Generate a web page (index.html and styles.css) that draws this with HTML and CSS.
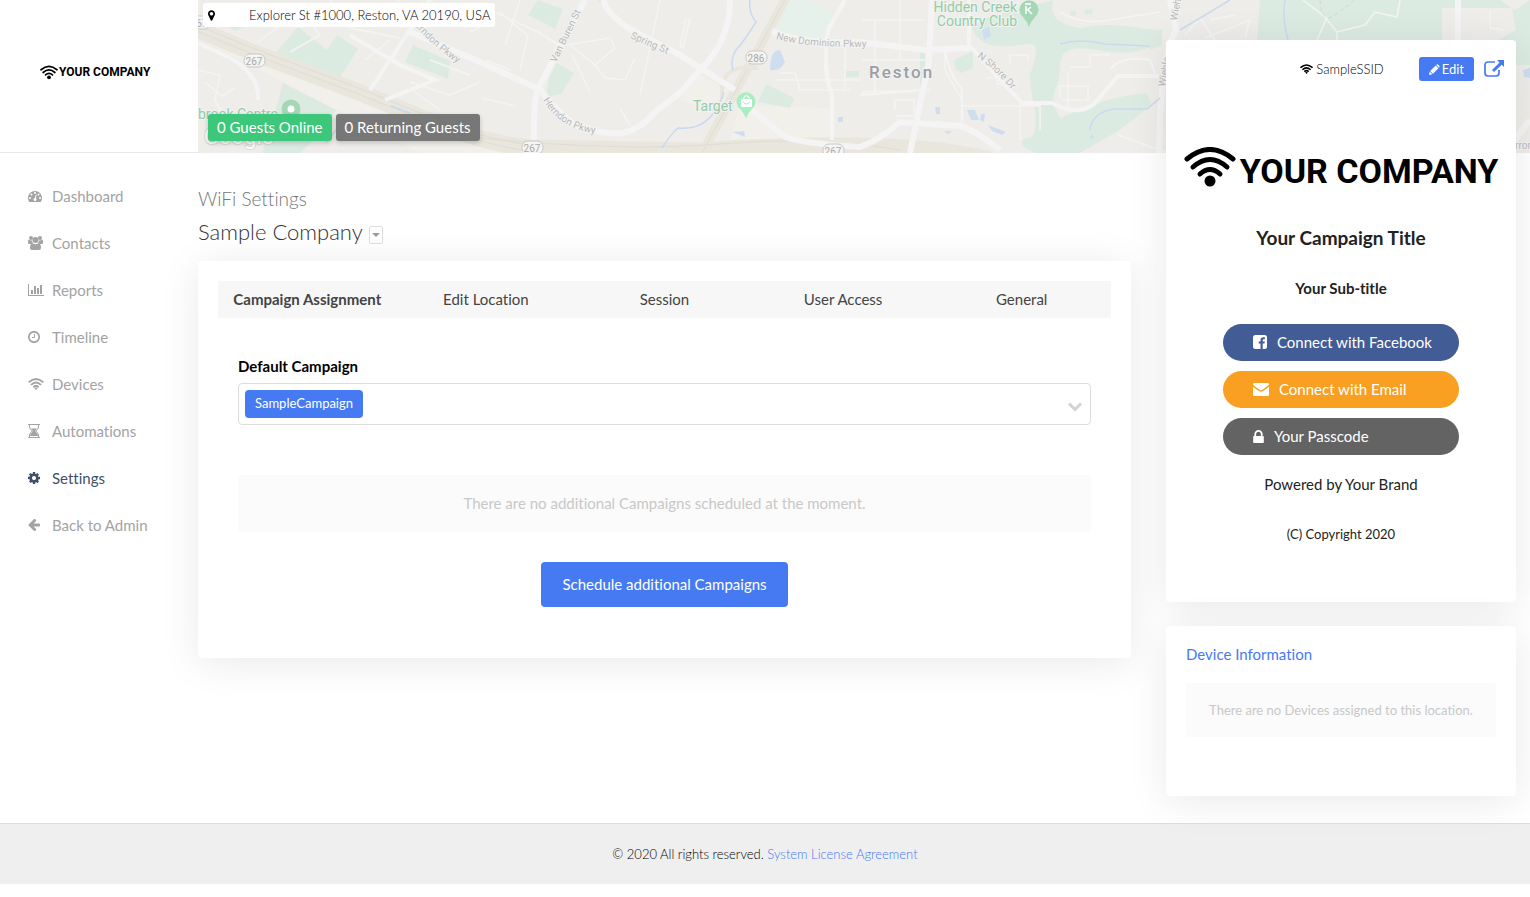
FILE: index.html
```
<!DOCTYPE html>
<html lang="en">
<head>
    <meta charset="UTF-8">
    <meta name="viewport" content="width=device-width, initial-scale=1.0">
    <title>WiFi Settings</title>
    <link rel="stylesheet" href="styles.css">
</head>
<body>
    <!-- shared icons -->
    <svg class="sprite" aria-hidden="true">
        <symbol id="logo-wifi" viewBox="0 0 52 40">
            <g fill="none" stroke="currentColor" stroke-width="5" stroke-linecap="round">
                <path d="M3 12Q26-7 49 12"/>
                <path d="M9 20Q26 5 43 20"/>
                <path d="M16 27Q26 18 36 27"/>
            </g>
            <circle cx="26" cy="34" r="5.5" fill="currentColor"/>
        </symbol>
        <symbol id="wifi" viewBox="0 0 16 12">
            <g fill="none" stroke="currentColor" stroke-width="1.9">
                <path d="M.6 4.4Q8-2.4 15.4 4.4"/>
                <path d="M3 6.9Q8 2.3 13 6.9"/>
                <path d="M5.3 9.2Q8 6.9 10.7 9.2"/>
            </g>
            <path d="M6.3 10.2Q8 8.9 9.7 10.2L8 12z" fill="currentColor"/>
        </symbol>
    </svg>

    <div class="page">
        <div class="brand">
            <a href="#" class="logo logo-small"><svg><use href="#logo-wifi"/></svg>YOUR COMPANY</a>
        </div>

        <header class="map">
            <svg class="map-canvas" viewBox="198 0 1332 153" preserveAspectRatio="xMinYMin slice" aria-hidden="true">
                <rect x="198" width="1332" height="153" fill="#eeedea"/>
                <g fill="#f2f0ea">
                    <path d="M198 20L420 110 540 153H420L198 38z"/>
                    <path d="M740 105L830 108 832 138 770 143 730 140zM700 75L728 90 715 110 680 100z"/>
                </g>
                <g fill="#dcebe1">
                    <path d="M298 27L272 57 298 68 338 80 358 49 337 35 327 50z"/>
                    <path d="M283 83L336 110 315 138 300 153H262L270 130z"/>
                    <path d="M413 45L450 61 448 79 405 62zM230 22L245 26 235 31 227 26z"/>
                    <path d="M538 0L563 9 555 29 528 15zM557 63L574 73 561 94 546 97 549 78z"/>
                    <path d="M598 0H601V4zM766 84L794 98 790 108 758 102zM846 71H859V77H846zM920 51H925V88H920z"/>
                    <path d="M954 60L973 51 973 68 962 73 955 69z"/>
                    <path d="M972 28L988 17 1053 0C1049 20 1062 25 1082 28 1112 20 1140 30 1163 30L1158 45 1142 50C1110 58 1092 44 1070 50 1055 53 1064 74 1055 90 1050 105 1058 112 1060 118 1084 108 1110 96 1147 93L1151 104C1125 130 1098 142 1080 153H1035C1018 146 1018 138 1032 137 1042 120 1029 95 1030 75 1035 60 1040 44 1030 44 1005 46 982 52 972 28z"/>
                    <path d="M1260 0H1500L1515 10 1530 0V65H1510L1500 40H1257zM1150 30L1162 30 1162 45 1150 50zM1070 12L1075 10 1077 15 1071 16zM1084 10L1093 9 1092 14 1085 14z"/>
                </g>
                <path d="M786 0H809L837 18 826 39 776 31z" fill="#e6f1eb"/>
                <path d="M1442 8H1512L1516 30 1498 40H1442z" fill="#eeedea"/>

                <!-- highways -->
                <g fill="none">
                    <path d="M192 27Q245 50 300 70T420 117T530 148L700 151Q900 137 990 160" stroke="#e9e6de" stroke-width="17"/>
                    <path d="M787-4L702 153" stroke="#e9e6de" stroke-width="9"/>
                    <path d="M192 23Q245 46 300 66T420 113T530 145M192 29Q245 52 300 72T420 119T530 151M787-4L702 153M480 138Q620 152 720 144T900 150" stroke="#e1ddd3"/>
                    <path d="M722 98C720 70 735 66 758 68" stroke="#e9e6de" stroke-width="4"/>
                </g>

                <!-- small streets -->
                <g fill="none" stroke="#f4f4f3" stroke-width="1.5">
                    <path d="M258 42L300 10 320 35 290 52M330 0L350 28 400 38M365 60L390 40M400 0L375 20M410 82L450 95 480 82M412 90L440 110M430 60L470 75"/>
                    <path d="M198 70L220 75 215 100 232 130M205 82L222 96 235 88M480 5L540 33 560 46 610 38 615 48 595 65 570 45M500 12L528 36 520 70M486 60L510 70M520 0L505 45M490 22L470 32"/>
                    <path d="M595 65L605 78 625 80 635 58M660 0L640 95M690 18L683 48 680 47 686 18M572 55L590 92M620 109L630 125M482 98L515 106"/>
                    <path d="M775 80H860M780 73H795L800 90H850M845 40V92M862 60H925M862 20H925M875 20V95M900 0V60M862 92L930 90"/>
                    <path d="M945 50V70L962 100V125M895 110V100H914V116H895M986 78H997V84H1017M1010 65V55H1028V60M1062 100H1088V86H1060V98M1070 67H1090V55H1110M1068 72V108M1060 12Q1080 25 1110 20T1160 12M962 106H1040V130M1020 100V140M1118 135L1165 152"/>
                    <path d="M1185 35L1200 18 1215 40M1210 20L1235 15M1205 38L1250 20 1245 38M1303 0L1325 17 1337 32 1365 25 1375 12 1397 17 1400 0M1327 17L1317 40M1337 32V40M1490 10V28L1505 30"/>
                </g>

                <!-- main streets -->
                <g fill="none" stroke="#f4f4f4">
                    <path d="M198 43L230 58Q260 75 258 100M350 35L400 65 435 80 385 100M430 0L370 90" stroke-width="4"/>
                    <path d="M585 0L540 85Q533 95 534 140M410 32L480 62 541 90Q550 105 575 125 600 135 622 133 640 130 655 112L680 93 700 70Q730 42 730 0" stroke-width="6"/>
                    <path d="M603 0Q608 15 630 29L680 55 735 90M752 110L785 137Q800 143 860 147 880 140 900 122L960 126Q975 130 1000 150M772 31Q800 44 860 42L925 50 970 48" stroke-width="6"/>
                    <path d="M932 0L929 60 910 153" stroke-width="6"/>
                    <path d="M845 0L828 30Q822 70 832 95V140M969 0V45Q1000 80 1022 103H1052Q1078 117 1094 104L1118 76H1160" stroke-width="4"/>
                    <path d="M945 50Q948 72 962 90V120M1110 70Q1120 55 1150 60L1157 78M860 95L925 90" stroke-width="2"/>
                    <path d="M1170 0L1176 30Q1160 60 1159 153M1458 0V40M1530 120L1505 153" stroke-width="6"/>
                </g>
                <path d="M1320 0Q1322 25 1335 15L1355 0" fill="none" stroke="#cddad0" stroke-dasharray="4 3"/>

                <!-- water -->
                <path d="M750 0Q748 12 756 22 745 40 736 50 730 60 733 70M724 92Q720 105 712 115 700 130 678 128 670 135 662 148M1060 44Q1080 38 1105 44L1150 46M1090 130Q1092 112 1115 109H1147L1160 98M1180 30L1230 0M1285 0Q1282 20 1288 40M391 106L410 113" fill="none" stroke="#c9daf0" stroke-width="1.5"/>
                <g fill="#cfdeee">
                    <path d="M770 70Q770 50 780 50L785 62Q780 72 770 70zM982 30L989 27 991 36 984 40zM967 110L975 110 979 120 971 120zM981 114L985 114 984 122 980 120zM988 125L1006 132 1002 135 992 131zM935 107H940V114H936zM838 117H843V122H838zM944 131H952L948 134zM732 132L744 131 745 137zM1523 70L1530 68V78L1524 77zM332 133L340 125 330 140 324 145z"/>
                    <circle cx="1092" cy="137" r="2"/>
                </g>

                <!-- route shields -->
                <g class="map-shield">
                    <rect x="244" y="54" width="21" height="13" rx="6"/><text x="254" y="65">267</text>
                    <rect x="189" y="16" width="21" height="13" rx="6"/><text x="199" y="27">267</text>
                    <rect x="522" y="141" width="21" height="13" rx="6"/><text x="532" y="152">267</text>
                    <rect x="746" y="51" width="21" height="13" rx="6"/><text x="756" y="62">286</text>
                    <rect x="823" y="144" width="21" height="13" rx="6"/><text x="833" y="155">267</text>
                </g>

                <!-- street names -->
                <defs>
                    <path id="st-herndon" d="M543 100Q554 119 572 127T600 133"/>
                    <path id="st-herndon2" d="M410 20Q436 52 480 78"/>
                    <path id="st-dominion" d="M776 39Q806 48 875 47"/>
                    <path id="st-spring" d="M630 38L676 58"/>
                    <path id="st-shore" d="M977 57Q998 72 1016 95"/>
                </defs>
                <g class="map-street">
                    <text><textPath href="#st-herndon">Herndon Pkwy</textPath></text>
                    <text><textPath href="#st-herndon2">Herndon Pkwy</textPath></text>
                    <text><textPath href="#st-dominion">New Dominion Pkwy</textPath></text>
                    <text><textPath href="#st-spring">Spring St</textPath></text>
                    <text><textPath href="#st-shore">N Shore Dr</textPath></text>
                    <text transform="translate(556 63) rotate(-64)">Van Buren St</text>
                    <text transform="translate(1177 21) rotate(-80)">Wiehle</text>
                    <text transform="translate(1165 87) rotate(-80)">Wiehle</text>
                    <text x="1515" y="149">rron</text>
                </g>

                <!-- places -->
                <g class="map-place">
                    <text x="1017" y="12" text-anchor="end">Hidden Creek</text>
                    <text x="1017" y="26" text-anchor="end">Country Club</text>
                    <text x="693" y="111">Target</text>
                    <text x="198" y="119">brook Centre</text>
                </g>
                <text class="map-city" x="869" y="78">Reston</text>
                <path d="M1029 27Q1027 21 1023 17A9.500 9.500 0 1 1 1035 17Q1031 21 1029 27z" fill="#a5d6b6"/>
                <path d="M1025 4H1031M1026 6V14M1027 10L1031 7M1028 10L1032 14" stroke="#fff" stroke-width="1.5" fill="none"/>
                <path d="M746 118Q744 113 740 109A9.500 9.500 0 1 1 752 109Q748 113 746 118z" fill="#abedc2"/>
                <rect x="741" y="99" width="11" height="8" rx="1" fill="#fff"/>
                <path d="M743 102Q746 106 750 102" stroke="#abedc2" fill="none"/>
                <path d="M744 99V97Q746 94 749 97V99" stroke="#fff" fill="none"/>
                <circle cx="291" cy="109" r="6.5" fill="#fff" stroke="#a5d6b6" stroke-width="6"/>
                <text class="map-mark" x="204" y="144">Google</text>
            </svg>
            <div class="map-info">
                <address class="address">
                    <svg viewBox="384 128 1024 1536"><path fill="currentColor" d="M1152 640q0-106-75-181t-181-75-181 75-75 181 75 181 181 75 181-75 75-181zm256 0q0 109-33 179l-364 774q-16 33-47.500 52t-67.500 19-67.500-19-46.500-52l-365-774q-33-70-33-179 0-212 150-362t362-150 362 150 150 362z"/></svg>
                    <span>Explorer St #1000, Reston, VA 20190, USA</span>
                </address>
                <div class="badges">
                    <span class="badge badge-online">0 Guests Online</span>
                    <span class="badge">0 Returning Guests</span>
                </div>
            </div>
        </header>

        <nav class="menu">
            <a href="#">
                <svg width="14" height="14" viewBox="0 0 1792 1792"><path fill="currentColor" d="M384 1152q0-53-37.500-90.500t-90.500-37.500-90.500 37.500-37.500 90.500 37.500 90.500 90.500 37.500 90.500-37.500 37.500-90.500zm192-448q0-53-37.500-90.500t-90.500-37.500-90.500 37.500-37.500 90.500 37.500 90.500 90.500 37.500 90.500-37.500 37.500-90.500zm428 481l101-382q6-26-7.500-48.500t-38.500-29.500-48 6.500-30 39.500l-101 382q-60 5-107 43.500t-63 98.500q-20 77 20 146t117 89 146-20 89-117q16-60-6-117t-72-91zm660-33q0-53-37.500-90.500t-90.500-37.500-90.500 37.500-37.500 90.500 37.500 90.500 90.500 37.500 90.500-37.500 37.500-90.500zm-640-640q0-53-37.500-90.500t-90.500-37.500-90.500 37.500-37.500 90.500 37.500 90.500 90.500 37.500 90.500-37.500 37.500-90.500zm448 192q0-53-37.500-90.500t-90.500-37.500-90.500 37.500-37.500 90.500 37.500 90.500 90.500 37.500 90.500-37.500 37.500-90.500zm320 448q0 261-141 483-19 29-54 29h-1402q-35 0-54-29-141-221-141-483 0-182 71-348t191-286 286-191 348-71 348 71 286 191 191 286 71 348z"/></svg>
                <span>Dashboard</span>
            </a>
            <a href="#">
                <svg width="15" height="14" viewBox="0 0 15 14" fill="currentColor"><circle cx="3" cy="2" r="2"/><circle cx="12" cy="2" r="2"/><circle cx="7.5" cy="4" r="3"/><path d="M0 7V5.500Q0 3.600 1 3.600 3 5 4 4.200 4 6 5 7 3.700 7 3.200 8H1.200Q0 8 0 7zM15 7V5.500Q15 3.600 14 3.600 12 5 11 4.200 11 6 10 7 11.300 7 11.800 8H13.800Q15 8 15 7zM2 12Q2 7.500 4.700 7.300 7.500 9 10.300 7.300 13 7.500 13 12 13 14 11 14H4Q2 14 2 12z"/></svg>
                <span>Contacts</span>
            </a>
            <a href="#">
                <svg width="16" height="14" viewBox="0 0 16 14" fill="currentColor"><path d="M0 1H1V12H16V13H0zM3 7H5V11H3zM6 3H8V11H6zM9 5H11V11H9zM12 2H14V11H12z"/></svg>
                <span>Reports</span>
            </a>
            <a href="#">
                <svg width="12" height="12" viewBox="0 0 12 12" fill="none" stroke="currentColor"><circle cx="6" cy="6" r="5.2" stroke-width="1.7"/><path d="M6.500 3V6.500H4"/></svg>
                <span>Timeline</span>
            </a>
            <a href="#">
                <svg width="16" height="12"><use href="#wifi"/></svg>
                <span>Devices</span>
            </a>
            <a href="#">
                <svg width="12" height="14" viewBox="0 0 12 14" fill="currentColor"><path d="M0 0H12V1H0zM0 13H12V14H0z"/><path d="M1.500 1V3Q2 6 4.500 7 2 8 1.500 11V13M10.500 1V3Q10 6 7.500 7 10 8 10.500 11V13" fill="none" stroke="currentColor"/><path d="M3 4.500H9L7 7 9.500 10 10 12H2L2.500 10 5 7z"/></svg>
                <span>Automations</span>
            </a>
            <a href="#" class="active">
                <svg width="12" height="12" viewBox="128 128 1536 1536"><path fill="currentColor" d="M1152 896q0-106-75-181t-181-75-181 75-75 181 75 181 181 75 181-75 75-181zm512-109v222q0 12-8 23t-20 13l-185 28q-19 54-39 91 35 50 107 138 10 12 10 25t-9 23q-27 37-99 108t-94 71q-12 0-26-9l-138-108q-44 23-91 38-16 136-29 186-7 28-36 28h-222q-14 0-24.500-8.500t-11.500-21.500l-28-184q-49-16-90-37l-141 107q-10 9-25 9-14 0-25-11-126-114-165-168-7-10-7-23 0-12 8-23 15-21 51-66.500t54-70.500q-27-50-41-99l-183-27q-13-2-21-12.500t-8-23.500v-222q0-12 8-23t19-13l186-28q14-46 39-92-40-57-107-138-10-12-10-24 0-10 9-23 26-36 98.500-107.500t94.500-71.500q13 0 26 10l138 107q44-23 91-38 16-136 29-186 7-28 36-28h222q14 0 24.500 8.500t11.500 21.500l28 184q49 16 90 37l142-107q9-9 24-9 13 0 25 10 129 119 165 170 7 8 7 22 0 12-8 23-15 21-51 66.500t-54 70.500q26 50 41 98l183 28q13 2 21 12.500t8 23.500z"/></svg>
                <span>Settings</span>
            </a>
            <a href="#">
                <svg width="12" height="12" viewBox="0 192 1536 1536"><path fill="currentColor" d="M1536 896v128q0 53-32.500 90.500t-84.500 37.500h-704l293 294q38 36 38 90t-38 90l-75 76q-37 37-90 37-52 0-91-37l-651-652q-37-37-37-90 0-52 37-91l651-650q38-38 91-38 52 0 90 38l75 74q38 38 38 91t-38 91l-293 293h704q52 0 84.500 37.500t32.500 90.500z"/></svg>
                <span>Back to Admin</span>
            </a>
        </nav>

        <main class="main">
            <h1>WiFi Settings</h1>
            <h2>Sample Company <button type="button" class="toggle" aria-label="Change company"><svg viewBox="0 0 8 4"><path d="M0 0H8L4 4z" fill="currentColor"/></svg></button></h2>

            <section class="card settings">
                <div class="tabs" role="tablist">
                    <button type="button" role="tab" aria-selected="true" class="active">Campaign Assignment</button>
                    <button type="button" role="tab">Edit Location</button>
                    <button type="button" role="tab">Session</button>
                    <button type="button" role="tab">User Access</button>
                    <button type="button" role="tab">General</button>
                </div>
                <div class="settings-body">
                    <label for="campaign">Default Campaign</label>
                    <div class="picker">
                        <span class="tag">SampleCampaign</span>
                        <select id="campaign"><option></option></select>
                        <svg viewBox="0 0 14 10"><path d="M1 1.500L7 7.500 13 1.500" fill="none" stroke="currentColor" stroke-width="3"/></svg>
                    </div>
                    <p class="empty">There are no additional Campaigns scheduled at the moment.</p>
                    <button type="button" class="btn">Schedule additional Campaigns</button>
                </div>
            </section>
        </main>

        <aside class="side">
            <section class="card preview">
                <div class="preview-bar">
                    <span class="ssid"><svg><use href="#wifi"/></svg>SampleSSID</span>
                    <button type="button" class="edit"><svg viewBox="0 0 12 12" fill="currentColor"><path d="M0 12L.8 8.300 3.700 11.200zM1.300 7.700L7.300 1.700 10.300 4.700 4.300 10.700zM7.900 1.100Q9 0 9.800 .6L11.400 2.200Q12 3 10.900 4.100z"/></svg>Edit</button>
                    <a href="#" class="open" aria-label="Open preview"><svg viewBox="0 0 20 18"><path d="M11 2H4Q1 2 1 5V13Q1 16 4 16H12Q15 16 15 13V10" fill="none" stroke="currentColor" stroke-width="1.7"/><path d="M13 0H20V7L17.800 4.800 10 12 8 10 15.500 2.500z" fill="currentColor"/></svg></a>
                </div>
                <div class="logo logo-large"><svg><use href="#logo-wifi"/></svg>YOUR COMPANY</div>
                <h3>Your Campaign Title</h3>
                <h4>Your Sub-title</h4>
                <div class="connect">
                    <button type="button" class="facebook"><svg width="14" height="14" viewBox="0 0 14 14"><path fill="currentColor" d="M2.500 0H11.500Q14 0 14 2.500V11.500Q14 14 11.500 14H9.700V8.600H11.500L11.800 6.500H9.700V5.200Q9.700 4.200 10.800 4.200H11.900V2.300Q7.500 1.500 7.500 5V6.500H5.700V8.600H7.500V14H2.500Q0 14 0 11.500V2.500Q0 0 2.500 0z"/></svg>Connect with Facebook</button>
                    <button type="button" class="email"><svg width="16" height="14" viewBox="0 0 16 14"><path fill="currentColor" d="M1.500 1H14.500Q16 1 16 2.300 15.500 4 8.500 8.300 8 8.500 7.500 8.300 .5 4 0 2.300 0 1 1.500 1zM0 4.500Q1 6 7 9.500 8 10 9 9.500 15 6 16 4.500V12.500Q16 14 14.500 14H1.500Q0 14 0 12.500z"/></svg>Connect with Email</button>
                    <button type="button" class="passcode"><svg width="11" height="13" viewBox="320 128 1152 1408"><path fill="currentColor" d="M640 768h512v-192q0-106-75-181t-181-75-181 75-75 181v192zm832 96v576q0 40-28 68t-68 28h-960q-40 0-68-28t-28-68v-576q0-40 28-68t68-28h32v-192q0-184 132-316t316-132 316 132 132 316v192h32q40 0 68 28t28 68z"/></svg>Your Passcode</button>
                </div>
                <p>Powered by Your Brand</p>
                <p class="small">(C) Copyright 2020</p>
            </section>

            <section class="card devices">
                <h5>Device Information</h5>
                <p class="empty">There are no Devices assigned to this location.</p>
            </section>
        </aside>
    </div>

    <footer class="footer">© 2020 All rights reserved. <a href="#">System License Agreement</a></footer>
</body>
</html>
```
FILE: styles.css
```
* {
    box-sizing: border-box;
    margin: 0;
    padding: 0;
}

body {
    font-family: Lato, 'Liberation Sans', sans-serif;
    font-size: 15px;
    font-variant-ligatures: none;
    line-height: 20px;
    color: #222;
    background-color: #fff;
}

button,
select {
    font: inherit;
    color: inherit;
    background: none;
    border: 0;
    cursor: pointer;
}

a {
    color: #467af3;
    text-decoration: none;
}

.sprite {
    display: none;
}

.page {
    display: grid;
    grid-template-columns: 198px minmax(0, 1fr) 364px;
    grid-template-rows: 153px auto;
}

/* logo */
.brand {
    display: flex;
    align-items: center;
    padding: 0 0 8px 40px;
    border-bottom: 1px solid #e8e8e8;
}

.logo {
    display: flex;
    align-items: center;
    font-family: Roboto, sans-serif;
    font-weight: 700;
    white-space: nowrap;
    color: #000;
}

.logo-small {
    gap: 1px;
    font-size: 12px;
}

.logo-small svg {
    width: 18px;
    height: 15px;
}

.logo-large {
    justify-content: center;
    gap: 4px;
    font-size: 34px;
    line-height: 49px;
}

.logo-large svg {
    align-self: flex-start;
    width: 52px;
    height: 40px;
}

/* map header */
.map {
    grid-column: 2 / 4;
    grid-row: 1;
    display: grid;
    overflow: hidden;
    background-color: #eeedea;
}

.map-canvas,
.map-info {
    grid-area: 1 / 1;
}

.map-canvas {
    width: 100%;
    height: 153px;
}

.map-canvas text {
    font-family: Roboto, sans-serif;
    paint-order: stroke;
    stroke: #f3f3f1;
    stroke-width: 2px;
}

.map-shield rect {
    fill: #f6f6f6;
    stroke: #c8c8c8;
}

.map-shield text {
    font-size: 10px;
    text-anchor: middle;
    fill: #aaa;
}

.map-street {
    font-size: 10px;
    fill: #b9b9b9;
}

.map-place {
    font-size: 14px;
    fill: #93cba7;
}

.map-canvas .map-city {
    font-size: 17px;
    font-weight: 500;
    letter-spacing: 2px;
    fill: #9b9ea3;
}

.map-canvas .map-mark {
    font-size: 22px;
    fill: #fff;
    stroke: #d8d8d6;
}

.map-info {
    z-index: 1;
    display: flex;
    flex-direction: column;
    justify-content: space-between;
    align-items: flex-start;
    padding: 3px 5px 12px;
}

.address {
    display: flex;
    align-items: center;
    gap: 34px;
    height: 24px;
    padding: 0 5px;
    font-size: 13px;
    font-style: normal;
    font-weight: 300;
    color: #000;
    background-color: #fff;
    border-radius: 3px;
}

.address svg {
    width: 7px;
    height: 11px;
}

.badges {
    display: flex;
    gap: 4px;
    padding-left: 5px;
}

.badge {
    padding: 3px 9px 4px;
    color: #fff;
    background-color: #777;
    border-radius: 3px;
    box-shadow: 0 2px 5px rgba(0, 0, 0, 0.2);
}

.badge-online {
    background-color: #3cc77a;
}

/* left menu */
.menu {
    padding: 19px 0 0 28px;
}

.menu a {
    display: grid;
    grid-template-columns: 24px auto;
    align-items: center;
    height: 47px;
    color: #a3a3a3;
}

.menu .active {
    color: #40506b;
}

/* main column */
.main {
    padding: 34px 35px 0 0;
}

.main h1 {
    font-size: 19px;
    font-weight: 300;
    line-height: 24px;
    color: #777;
}

.main h2 {
    display: flex;
    align-items: center;
    gap: 6px;
    margin: 7px 0 16px;
    font-size: 22px;
    font-weight: 300;
    line-height: 27px;
    color: #333;
}

.toggle {
    display: flex;
    align-items: center;
    justify-content: center;
    width: 14px;
    height: 18px;
    margin-top: 7px;
    color: #999;
    border: 1px solid #ddd;
    border-radius: 2px;
}

.toggle svg {
    width: 8px;
    height: 4px;
}

.card {
    background-color: #fff;
    border-radius: 4px;
    box-shadow: 0 5px 40px rgba(0, 0, 0, 0.09);
}

.settings {
    padding: 20px 20px 51px;
}

.tabs {
    display: grid;
    grid-template-columns: repeat(5, 1fr);
    height: 37px;
    color: #444;
    background-color: #f7f7f7;
}

.tabs button {
    padding-bottom: 2px;
}

.tabs .active {
    font-weight: 700;
}

.settings-body {
    display: flex;
    flex-direction: column;
    padding: 38px 20px 0;
}

.settings-body label {
    margin-bottom: 7px;
    font-weight: 700;
    color: #000;
}

.picker {
    position: relative;
    display: flex;
    height: 42px;
    padding: 6px;
    border: 1px solid #ddd;
    border-radius: 4px;
}

.picker select {
    flex: 1;
    appearance: none;
}

.picker svg {
    position: absolute;
    right: 8px;
    top: 18px;
    width: 14px;
    height: 10px;
    color: #d2d2d2;
    pointer-events: none;
}

.tag {
    height: 28px;
    padding: 3px 10px;
    font-size: 13px;
    color: #fff;
    background-color: #467af3;
    border-radius: 4px;
}

.empty {
    padding: 18px;
    text-align: center;
    color: #c8c8c8;
    background-color: #fbfbfb;
    border-radius: 3px;
}

.settings .empty {
    padding-bottom: 19px;
    margin: 50px 0 30px;
}

.btn {
    align-self: center;
    height: 45px;
    padding: 0 21px 1px;
    color: #fff;
    background-color: #467af3;
    border-radius: 4px;
}

/* right column */
.side {
    grid-column: 3;
    grid-row: 1 / 3;
    z-index: 2;
    display: flex;
    flex-direction: column;
    gap: 24px;
    padding: 40px 14px 27px 0;
}

.preview {
    padding: 17px 12px 58px;
    text-align: center;
}

.preview-bar {
    display: flex;
    align-items: center;
    justify-content: flex-end;
    gap: 10px;
    margin-bottom: 66px;
}

.ssid {
    display: flex;
    align-items: center;
    gap: 3px;
    margin-right: 25px;
    font-size: 13px;
    font-weight: 300;
    color: #000;
}

.ssid svg {
    width: 13px;
    height: 10px;
}

.edit {
    display: flex;
    align-items: center;
    gap: 2px;
    height: 24px;
    padding: 0 10px;
    font-size: 13px;
    color: #fff;
    background-color: #467af3;
    border-radius: 3px;
}

.edit svg {
    width: 11px;
    height: 11px;
}

.open,
.open svg {
    display: block;
    width: 20px;
    height: 18px;
}

.preview h3 {
    margin: 30px 0 28px;
    font-size: 19px;
    line-height: 24px;
}

.preview h4 {
    margin-bottom: 26px;
    font-size: 15px;
}

.connect {
    display: flex;
    flex-direction: column;
    gap: 10px;
    padding: 0 45px;
    margin-bottom: 19px;
}

.connect button {
    display: flex;
    align-items: center;
    gap: 10px;
    height: 37px;
    padding: 0 0 1px 30px;
    color: #fff;
    border-radius: 19px;
}

.facebook {
    background-color: #425c96;
}

.email {
    background-color: #f99f22;
}

.passcode {
    background-color: #636363;
}

.small {
    margin-top: 30px;
    font-size: 13px;
}

.devices {
    min-height: 170px;
    padding: 18px 20px;
}

.devices h5 {
    margin-bottom: 19px;
    font-size: 15px;
    font-weight: 400;
    color: #467af3;
}

.devices .empty {
    padding: 17px;
    font-size: 13px;
}

.footer {
    padding: 20px;
    margin-bottom: 13px;
    font-size: 13px;
    font-weight: 300;
    text-align: center;
    color: #000;
    background-color: #efefef;
    border-top: 1px solid #ddd;
}
```
